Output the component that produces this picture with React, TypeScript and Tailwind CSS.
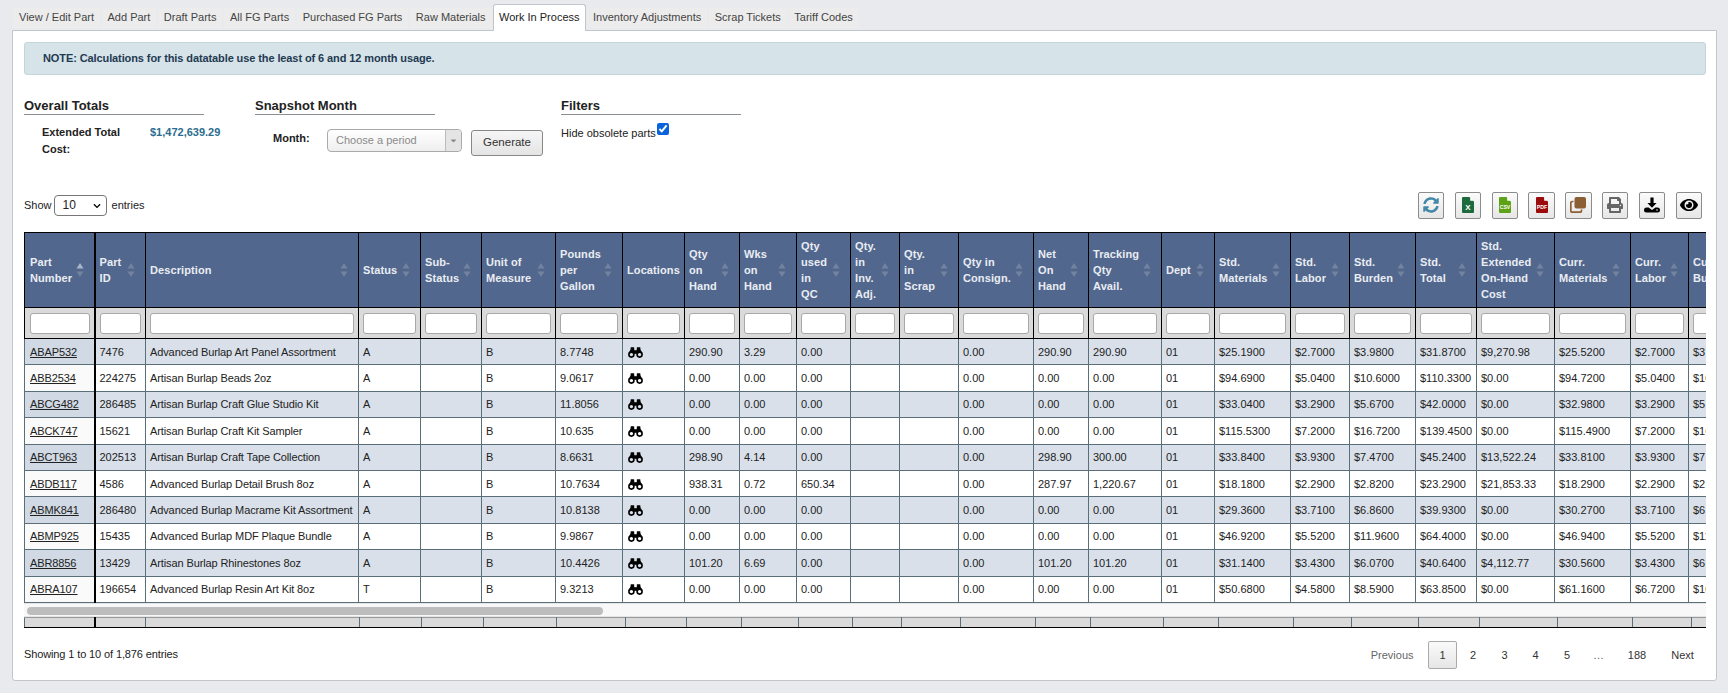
import { FaEye, FaPrint, FaSyncAlt, FaCaretDown } from "react-icons/fa";
import { FaChevronDown } from "react-icons/fa";

const columns = [
  { w: "w-[70px]", head: ["Part", "Number"] },
  { w: "w-[51px]", head: ["Part", "ID"] },
  { w: "w-[213px]", head: ["Description"] },
  { w: "w-[62px]", head: ["Status"] },
  { w: "w-[61px]", head: ["Sub-", "Status"] },
  { w: "w-[74px]", head: ["Unit of", "Measure"] },
  { w: "w-[67px]", head: ["Pounds", "per", "Gallon"] },
  { w: "w-[62px]", head: ["Locations"], noSort: true },
  { w: "w-[55px]", head: ["Qty", "on", "Hand"] },
  { w: "w-[57px]", head: ["Wks", "on", "Hand"] },
  { w: "w-[54px]", head: ["Qty", "used", "in", "QC"] },
  { w: "w-[49px]", head: ["Qty.", "in", "Inv.", "Adj."] },
  { w: "w-[59px]", head: ["Qty.", "in", "Scrap"] },
  { w: "w-[75px]", head: ["Qty in", "Consign."] },
  { w: "w-[55px]", head: ["Net", "On", "Hand"] },
  { w: "w-[73px]", head: ["Tracking", "Qty", "Avail."] },
  { w: "w-[53px]", head: ["Dept"] },
  { w: "w-[76px]", head: ["Std.", "Materials"] },
  { w: "w-[59px]", head: ["Std.", "Labor"] },
  { w: "w-[66px]", head: ["Std.", "Burden"] },
  { w: "w-[61px]", head: ["Std.", "Total"] },
  { w: "w-[78px]", head: ["Std.", "Extended", "On-Hand", "Cost"] },
  { w: "w-[76px]", head: ["Curr.", "Materials"] },
  { w: "w-[58px]", head: ["Curr.", "Labor"] },
  { w: "w-[72px]", head: ["Curr.", "Burden"] },
];

const footCols = [
  "w-[70px]", "w-[51px]", "w-[214px]", "w-[62px]", "w-[62px]", "w-[73px]", "w-[69px]", "w-[61px]", "w-[55px]", "w-[57px]",
  "w-[54px]", "w-[49px]", "w-[59px]", "w-[75px]", "w-[55px]", "w-[73px]", "w-[55px]", "w-[75px]", "w-[58px]", "w-[67px]",
  "w-[61px]", "w-[78px]", "w-[75px]", "w-[59px]", "w-[72px]",
];

const rows: string[][] = [
  ["ABAP532", "7476", "Advanced Burlap Art Panel Assortment", "A", "", "B", "8.7748", "*", "290.90", "3.29", "0.00", "", "", "0.00", "290.90", "290.90", "01", "$25.1900", "$2.7000", "$3.9800", "$31.8700", "$9,270.98", "$25.5200", "$2.7000", "$3.9800"],
  ["ABB2534", "224275", "Artisan Burlap Beads 2oz", "A", "", "B", "9.0617", "*", "0.00", "0.00", "0.00", "", "", "0.00", "0.00", "0.00", "01", "$94.6900", "$5.0400", "$10.6000", "$110.3300", "$0.00", "$94.7200", "$5.0400", "$10.6000"],
  ["ABCG482", "286485", "Artisan Burlap Craft Glue Studio Kit", "A", "", "B", "11.8056", "*", "0.00", "0.00", "0.00", "", "", "0.00", "0.00", "0.00", "01", "$33.0400", "$3.2900", "$5.6700", "$42.0000", "$0.00", "$32.9800", "$3.2900", "$5.6700"],
  ["ABCK747", "15621", "Artisan Burlap Craft Kit Sampler", "A", "", "B", "10.635", "*", "0.00", "0.00", "0.00", "", "", "0.00", "0.00", "0.00", "01", "$115.5300", "$7.2000", "$16.7200", "$139.4500", "$0.00", "$115.4900", "$7.2000", "$16.7200"],
  ["ABCT963", "202513", "Artisan Burlap Craft Tape Collection", "A", "", "B", "8.6631", "*", "298.90", "4.14", "0.00", "", "", "0.00", "298.90", "300.00", "01", "$33.8400", "$3.9300", "$7.4700", "$45.2400", "$13,522.24", "$33.8100", "$3.9300", "$7.4700"],
  ["ABDB117", "4586", "Advanced Burlap Detail Brush 8oz", "A", "", "B", "10.7634", "*", "938.31", "0.72", "650.34", "", "", "0.00", "287.97", "1,220.67", "01", "$18.1800", "$2.2900", "$2.8200", "$23.2900", "$21,853.33", "$18.2900", "$2.2900", "$2.8200"],
  ["ABMK841", "286480", "Advanced Burlap Macrame Kit Assortment", "A", "", "B", "10.8138", "*", "0.00", "0.00", "0.00", "", "", "0.00", "0.00", "0.00", "01", "$29.3600", "$3.7100", "$6.8600", "$39.9300", "$0.00", "$30.2700", "$3.7100", "$6.8600"],
  ["ABMP925", "15435", "Advanced Burlap MDF Plaque Bundle", "A", "", "B", "9.9867", "*", "0.00", "0.00", "0.00", "", "", "0.00", "0.00", "0.00", "01", "$46.9200", "$5.5200", "$11.9600", "$64.4000", "$0.00", "$46.9400", "$5.5200", "$11.9600"],
  ["ABR8856", "13429", "Artisan Burlap Rhinestones 8oz", "A", "", "B", "10.4426", "*", "101.20", "6.69", "0.00", "", "", "0.00", "101.20", "101.20", "01", "$31.1400", "$3.4300", "$6.0700", "$40.6400", "$4,112.77", "$30.5600", "$3.4300", "$6.0700"],
  ["ABRA107", "196654", "Advanced Burlap Resin Art Kit 8oz", "T", "", "B", "9.3213", "*", "0.00", "0.00", "0.00", "", "", "0.00", "0.00", "0.00", "01", "$50.6800", "$4.5800", "$8.5900", "$63.8500", "$0.00", "$61.1600", "$6.7200", "$10.5900"],
];

const tabs = ["View / Edit Part", "Add Part", "Draft Parts", "All FG Parts", "Purchased FG Parts", "Raw Materials", "Work In Process", "Inventory Adjustments", "Scrap Tickets", "Tariff Codes"];

function SortArrows({ active }: { active?: boolean }) {
  return (
    <svg viewBox="0 0 8 15" className="absolute right-[10px] top-1/2 h-[15px] w-[8px] -translate-y-1/2">
      <path d="M4 0.5L7.5 6H0.5Z" fill={active ? "#a9b5c9" : "#72839f"} />
      <path d="M4 14.5L0.5 9H7.5Z" fill="#72839f" />
    </svg>
  );
}

function Binoculars() {
  return (
    <svg viewBox="0 0 15 11" className="ml-px mt-px block h-[11px] w-[15px]">
      <rect x="2.6" y="0.2" width="3.6" height="3" rx="0.6" fill="#000" />
      <rect x="8.8" y="0.2" width="3.6" height="3" rx="0.6" fill="#000" />
      <path d="M2.6 2.5H6.2V6H.6Z" fill="#000" />
      <path d="M8.8 2.5H12.4L14.4 6H8.8Z" fill="#000" />
      <rect x="6" y="3.2" width="3" height="3.6" fill="#000" />
      <circle cx="3.4" cy="7.6" r="2.5" fill="none" stroke="#000" strokeWidth="1.6" />
      <circle cx="11.6" cy="7.6" r="2.5" fill="none" stroke="#000" strokeWidth="1.6" />
    </svg>
  );
}

function FileIcon({ color, label }: { color: string; label: string }) {
  const isX = label === "X";
  return (
    <svg viewBox="0 0 12 16" className="h-[16px] w-[12px]">
      <path d="M1 0H7.5L12 4.5V15a1 1 0 0 1-1 1H1a1 1 0 0 1-1-1V1a1 1 0 0 1 1-1Z" fill={color} />
      <path d="M8.2 0L12 3.8H8.2Z" fill="#ffffff" />
      <text x="6" y={isX ? 13.2 : 12} textAnchor="middle" fill="#ffffff" fontFamily="'Liberation Sans', sans-serif" fontWeight="700" fontSize={isX ? 8 : 5.2}>{label}</text>
    </svg>
  );
}

function CloneIcon() {
  return (
    <svg viewBox="0 0 16 16" className="h-[16px] w-[16px]">
      <rect x="4.5" y="0" width="11.5" height="11.5" rx="2" fill="#8b5e34" />
      <path d="M3.5 4.5H2.2A1.4 1.4 0 0 0 .8 5.9V13.8A1.4 1.4 0 0 0 2.2 15.2H10.1A1.4 1.4 0 0 0 11.5 13.8V12.5" fill="none" stroke="#8b5e34" strokeWidth="1.7" />
    </svg>
  );
}

function DownloadIcon() {
  return (
    <svg viewBox="0 0 16 16" className="h-[16px] w-[16px]">
      <path d="M6.4 0.5H9.6V6H12.6L8 10.8 3.4 6H6.4Z" fill="#000000" />
      <path d="M2.5 10.5H4.6L8 13 11.4 10.5H13.5A2.5 2.5 0 0 1 16 13 2.5 2.5 0 0 1 13.5 15.5H2.5A2.5 2.5 0 0 1 0 13 2.5 2.5 0 0 1 2.5 10.5Z" fill="#000000" />
      <circle cx="13" cy="13" r="0.8" fill="#e8e8e8" />
    </svg>
  );
}

const toolButtons = [
  <FaSyncAlt key="r" className="text-[16px] text-[#4388a8]" />,
  <FileIcon key="x" color="#1d6b3c" label="X" />,
  <FileIcon key="c" color="#5ea215" label="CSV" />,
  <FileIcon key="p" color="#9b0b0b" label="PDF" />,
  <CloneIcon key="k" />,
  <FaPrint key="pr" className="text-[16px] text-[#666666]" />,
  <DownloadIcon key="d" />,
  <FaEye key="e" className="text-[18px] text-black" />,
];

function Heading({ children }: { children: string }) {
  return <div className="h-[17px] border-b border-[#8a8f94] text-[13px] font-bold leading-[15px] text-[#222]">{children}</div>;
}

export default function App() {
  return (
    <div className="flex h-[693px] w-[1728px] flex-col overflow-hidden bg-[#e8eaee] pb-3 pl-3 pr-[11px] pt-1 font-['Liberation_Sans',Arial,sans-serif] text-[11px] text-[#222]">
      <div className="relative z-10 -mb-px flex h-[27px] gap-[1.5px] pl-px">
        {tabs.map((t) =>
          t === "Work In Process" ? (
            <div key={t} className="flex items-center rounded-t-[3px] border border-b-0 border-[#c0c6cc] bg-white px-[5px] pb-px text-[#222]">{t}</div>
          ) : (
            <div key={t} className="flex h-[20px] items-center self-center bg-[#ececec] px-[6px] text-[#444]">{t}</div>
          )
        )}
      </div>

      <div className="flex flex-1 flex-col rounded-b-[3px] border border-[#c0c6cc] bg-white pl-[11px] pr-[10px] pt-[11px]">
        <div className="flex h-[33px] items-center rounded-[3px] border border-[#c3d4da] bg-[#d6e3e8] pl-[18px] font-bold tracking-[-0.1px] text-[#1f3a52]">
          NOTE: Calculations for this datatable use the least of 6 and 12 month usage.
        </div>

        <div className="mt-[23px] flex h-[93px]">
          <div className="mr-[51px] w-[180px] shrink-0">
            <Heading>Overall Totals</Heading>
            <div className="mt-[9px] flex pl-[18px] leading-[17px]">
              <div className="w-[108px] shrink-0 font-bold">Extended Total<br />Cost:</div>
              <div className="shrink-0 whitespace-nowrap font-bold text-[#2b6d8f]">$1,472,639.29</div>
            </div>
          </div>
          <div className="mr-[126px] w-[180px] shrink-0">
            <Heading>Snapshot Month</Heading>
            <div className="flex w-[300px]">
              <div className="ml-[18px] mt-[15px] w-[54px] shrink-0 font-bold">Month:</div>
              <div className="mt-[14px] flex h-[23px] w-[135px] shrink-0 items-center rounded-[4px] border border-[#aaa] bg-gradient-to-b from-white to-[#efefef]">
                <span className="flex-1 whitespace-nowrap pl-[8px] text-[#8a8a8a]">Choose a period</span>
                <span className="flex h-full w-[16px] items-center justify-center rounded-r-[4px] border-l border-[#bbb] bg-[#e4e4e4] text-[9px] text-[#888]"><FaCaretDown /></span>
              </div>
              <button className="ml-[9px] mt-[15px] h-[26px] w-[72px] shrink-0 rounded-[3px] border border-[#888] bg-gradient-to-b from-[#f6f6f6] to-[#e4e4e4] text-[11.5px] text-[#333]">Generate</button>
            </div>
          </div>
          <div className="w-[180px] shrink-0">
            <Heading>Filters</Heading>
            <div className="relative mt-[9px] leading-[18px]">
              Hide obsolete parts
              <input type="checkbox" defaultChecked className="absolute left-[96px] top-[-1px] h-[12px] w-[12px] accent-[#0a63dc]" />
            </div>
          </div>
        </div>

        <div className="flex h-[28px] items-center justify-between">
          <div className="flex items-center">
            <span>Show</span>
            <span className="relative ml-[2px] mr-[5px] flex h-[21px] w-[53px] items-center rounded-[4px] border border-[#777] bg-white pl-[8px] text-[12px]">
              10
              <FaChevronDown className="absolute right-[5px] top-[6px] text-[8px] text-black" />
            </span>
            <span>entries</span>
          </div>
          <div className="mr-[4px] flex gap-[10.3px]">
            {toolButtons.map((icon, i) => (
              <button key={i} className="flex h-[27px] w-[26.5px] items-center justify-center rounded-[2px] border border-[#8c8c8c] bg-gradient-to-b from-[#fbfbfb] to-[#e6e6e6]">
                {icon}
              </button>
            ))}
          </div>
        </div>

        <div className="mt-[13px] w-[1682px] overflow-hidden">
          <table className="w-[1736px] table-fixed border-collapse leading-[16px]">
            <colgroup>
              {columns.map((c, i) => <col key={i} className={c.w} />)}
            </colgroup>
            <thead>
              <tr className="h-[75px]">
                {columns.map((c, i) => (
                  <th key={i} className={`relative border border-black bg-[#52678d] pr-[5px] text-left align-middle text-[11px] font-bold tracking-[0.1px] text-[#e9edf3] ${i === 0 ? "border-r-2 pl-[5px]" : "pl-[4px]"}`}>
                    {c.head.map((line, j) => <div key={j} className="whitespace-nowrap">{line}</div>)}
                    {!c.noSort && <SortArrows active={i === 0} />}
                  </th>
                ))}
              </tr>
              <tr className="h-[31px]">
                {columns.map((c, i) => (
                  <th key={i} className={`border border-black bg-[#dadada] pr-[4px] align-middle ${i === 0 ? "border-r-2 pl-[5px]" : "pl-[4px]"}`}>
                    <input aria-label={c.head.join(" ")} className="block h-[21px] w-full rounded-[3px] border border-[#a8a8a8] bg-white" />
                  </th>
                ))}
              </tr>
            </thead>
            <tbody>
              {rows.map((row, r) => (
                <tr key={r} className="h-[26.4px]">
                  {row.map((cell, i) => (
                    <td
                      key={i}
                      className={`overflow-hidden whitespace-nowrap border border-[#5b6f7b] pr-[3px] align-middle text-[11px] text-[#222] ${
                        i === 0 || i === 2 ? "tracking-[-0.11px]" : ""
                      } ${
                        i === 0
                          ? r % 2 === 0
                            ? "border-r-2 border-r-black bg-[#d0d9e4] pl-[5px]"
                            : "border-r-2 border-r-black bg-[#fafafa] pl-[5px]"
                          : r % 2 === 0
                            ? "bg-[#d9e0ea] pl-[4px]"
                            : "bg-white pl-[4px]"
                      }`}
                    >
                      {i === 0 ? <span className="underline">{cell}</span> : cell === "*" ? <Binoculars /> : cell}
                    </td>
                  ))}
                </tr>
              ))}
            </tbody>
          </table>
          <div className="h-[14px] border-y border-[#e4e4e4] bg-[#f8f8f8] pt-[3px]">
            <div className="ml-[3px] h-[8px] w-[576px] rounded-[4px] bg-[#bdbdbd]" />
          </div>
          <table className="w-[1736px] table-fixed border-collapse">
            <colgroup>
              {footCols.map((w, i) => <col key={i} className={w} />)}
            </colgroup>
            <tbody>
              <tr className="h-[10px]">
                {footCols.map((_, i) => (
                  <td key={i} className={`border border-b-black border-l-[#5b6f7b] border-r-[#5b6f7b] border-t-[#999] bg-[#dadada] p-0 ${i === 0 ? "border-r-2 border-r-black" : ""}`} />
                ))}
              </tr>
            </tbody>
          </table>
        </div>

        <div className="mt-[13px] flex h-[29px] items-center justify-between pr-px">
          <span className="pb-[2px] tracking-[-0.12px]">Showing 1 to 10 of 1,876 entries</span>
          <div className="flex items-center text-[#333]">
            <span className="mr-[14.5px] text-[#666]">Previous</span>
            <span className="flex h-[28px] w-[29px] items-center justify-center rounded-[2px] border border-[#aaa] bg-gradient-to-b from-[#fafafa] to-[#e6e6e6]">1</span>
            <span className="w-[32px] text-center">2</span>
            <span className="w-[31px] text-center">3</span>
            <span className="w-[31px] text-center">4</span>
            <span className="w-[32px] text-center">5</span>
            <span className="w-[31px] text-center text-[#666]">…</span>
            <span className="w-[46px] text-center">188</span>
            <span className="w-[45px] text-center">Next</span>
          </div>
        </div>
      </div>
    </div>
  );
}
